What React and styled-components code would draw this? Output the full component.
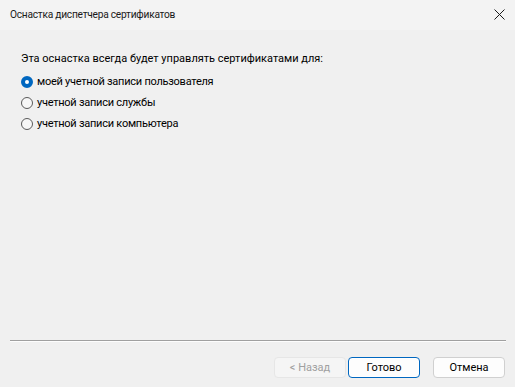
import React from 'react';
import styled, { createGlobalStyle } from 'styled-components';

const GlobalStyle = createGlobalStyle`
  html, body {
    margin: 0;
    padding: 0;
    background: #f0f0f0;
  }
  body {
    font-family: Roboto, "Liberation Sans", sans-serif;
    font-size: 11px;
    color: #000;
  }
`;

const Window = styled.div`
  width: 515px;
  height: 387px;
  display: flex;
  flex-direction: column;
  background: #f0f0f0;
`;

const TitleBar = styled.div`
  height: 30px;
  display: flex;
  align-items: center;
  justify-content: space-between;
  padding: 0 8px 0 10px;
  background: #f3f3f3;
  flex-shrink: 0;
`;

const Title = styled.span`
  font-size: 10.2px;
  letter-spacing: -0.25px;
  color: #1a1a1a;
  margin-top: -2px;
`;

const CloseButton = styled.button`
  width: 16px;
  height: 16px;
  padding: 0;
  border: none;
  background: transparent;
  display: flex;
  align-items: center;
  justify-content: center;
  margin-top: -2px;
`;

const Body = styled.div`
  flex: 1;
  padding: 21px 21px 0;
  display: flex;
  flex-direction: column;
`;

const Prompt = styled.div`
  line-height: 16px;
  margin-bottom: 6px;
`;

const Options = styled.div`
  display: flex;
  flex-direction: column;
  gap: 4px;
`;

const Option = styled.label`
  display: flex;
  align-items: center;
  gap: 4px;
  height: 17px;
  line-height: 17px;
  letter-spacing: -0.25px;
`;

const Radio = styled.span`
  width: 12px;
  height: 12px;
  box-sizing: border-box;
  border-radius: 50%;
  flex-shrink: 0;
  border: ${p => (p.$checked ? '4px solid #0067c0' : '1px solid #5a5a5a')};
  background: ${p => (p.$checked ? '#fff' : '#f7f7f7')};
`;

const Separator = styled.div`
  height: 1px;
  margin: 0 9px 0 10px;
  background: #a0a0a0;
  border-bottom: 1px solid #fdfdfd;
`;

const Footer = styled.div`
  display: flex;
  justify-content: flex-end;
  padding: 15px 10px 9px;
`;

const Button = styled.button`
  width: 72px;
  height: 21px;
  box-sizing: border-box;
  border-radius: 4px;
  font-family: inherit;
  font-size: 11px;
  padding: 0;
  margin-left: ${p => p.$gap || 0}px;
  background: ${p => (p.$disabled ? '#f5f5f5' : '#fdfdfd')};
  color: ${p => (p.$disabled ? '#a0a0a0' : '#000')};
  border: 1px solid ${p => (p.$primary ? '#0067c0' : p.$disabled ? '#e6e6e6' : '#d0d0d0')};
  box-shadow: ${p => (p.$primary ? 'inset 0 0 0 1px #ffffff' : 'none')};
`;

const options = [
  { label: 'моей учетной записи пользователя', checked: true },
  { label: 'учетной записи службы', checked: false },
  { label: 'учетной записи компьютера', checked: false },
];

export default function App() {
  return (
    <>
      <GlobalStyle />
      <Window>
        <TitleBar>
          <Title>Оснастка диспетчера сертификатов</Title>
          <CloseButton aria-label="Закрыть">
            <svg width="11" height="11" viewBox="0 0 11 11">
              <path d="M0.5 0.5 L10.5 10.5 M10.5 0.5 L0.5 10.5" stroke="#1a1a1a" strokeWidth="1" />
            </svg>
          </CloseButton>
        </TitleBar>
        <Body>
          <Prompt>Эта оснастка всегда будет управлять сертификатами для:</Prompt>
          <Options>
            {options.map(o => (
              <Option key={o.label}>
                <Radio $checked={o.checked} />
                {o.label}
              </Option>
            ))}
          </Options>
        </Body>
        <Separator />
        <Footer>
          <Button $disabled>&lt; Назад</Button>
          <Button $primary $gap={2}>Готово</Button>
          <Button $gap={13}>Отмена</Button>
        </Footer>
      </Window>
    </>
  );
}
